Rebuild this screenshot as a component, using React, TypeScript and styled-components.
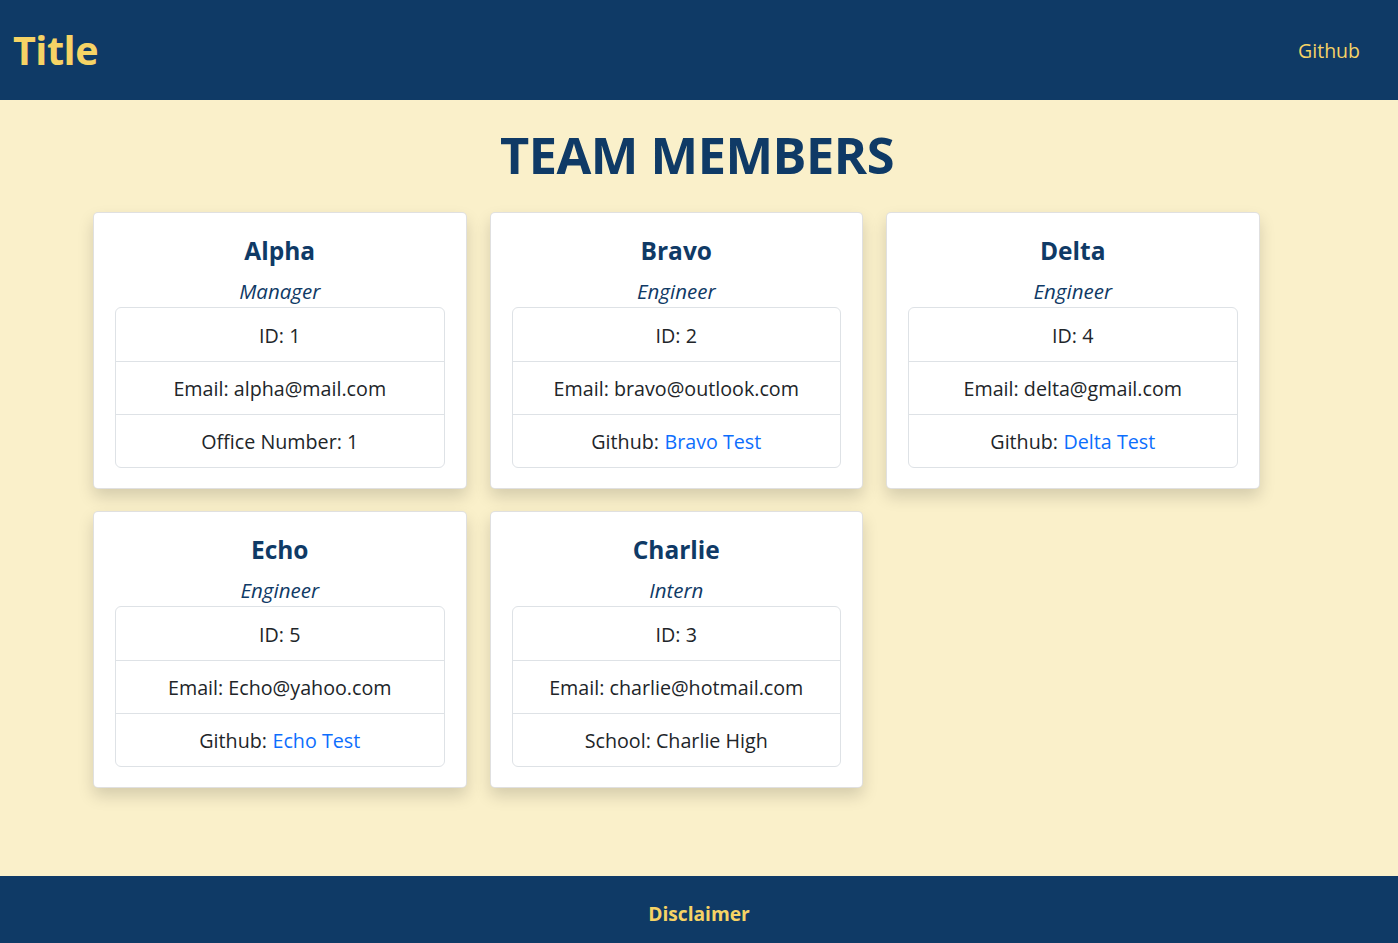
import React from "react";
import styled, { createGlobalStyle } from "styled-components";

const navy = "#0f3a66";
const gold = "#f6d365";
const cream = "#faf0ca";

const GlobalStyle = createGlobalStyle`
  * {
    box-sizing: border-box;
  }
  body {
    margin: 0;
    font-family: "Segoe UI", "Open Sans", "Noto Sans", sans-serif;
    color: #212529;
    background: ${cream};
  }
`;

const Page = styled.div`
  min-height: 100vh;
  display: flex;
  flex-direction: column;
`;

const Header = styled.header`
  height: 100px;
  background: ${navy};
  display: flex;
  align-items: center;
  justify-content: space-between;
  padding: 0 38px 0 13px;
`;

const Brand = styled.h1`
  margin: 2px 0 0;
  color: ${gold};
  font-size: 39.5px;
  font-weight: 700;
  line-height: 1.2;
  letter-spacing: -0.5px;
`;

const NavLink = styled.a`
  color: ${gold};
  font-size: 19.5px;
  text-decoration: none;
`;

const Main = styled.main`
  flex: 1;
  padding: 22px 0 60px;
`;

const Heading = styled.h2`
  margin: 0 4px 24px 0;
  text-align: center;
  color: ${navy};
  font-size: 50.5px;
  font-weight: 700;
  line-height: 1.3;
  letter-spacing: -0.5px;
`;

const CardGrid = styled.div`
  display: grid;
  grid-template-columns: repeat(3, 373.5px);
  gap: 22px 23px;
  padding-left: 93px;
`;

const Card = styled.div`
  background: #fff;
  border: 1px solid rgba(0, 0, 0, 0.12);
  border-radius: 5px;
  box-shadow: 0 8px 16px rgba(0, 0, 0, 0.15);
  padding: 21px 21px 20px;
  display: flex;
  flex-direction: column;
  align-items: stretch;
`;

const Name = styled.h3`
  margin: 1px 0 0;
  text-align: center;
  color: ${navy};
  font-size: 24.5px;
  font-weight: 700;
  line-height: 32px;
`;

const Role = styled.p`
  margin: 9px 0 0;
  text-align: center;
  color: ${navy};
  font-size: 20.5px;
  font-style: italic;
  line-height: 30px;
`;

const InfoList = styled.ul`
  list-style: none;
  margin: 1px 0 0;
  padding: 0;
  border: 1px solid #dee2e6;
  border-radius: 6px;
`;

const InfoItem = styled.li`
  height: 53px;
  display: flex;
  align-items: center;
  justify-content: center;
  padding-top: 2px;
  font-size: 19.7px;
  & + & {
    border-top: 1px solid #dee2e6;
  }
`;

const ProfileLink = styled.a`
  color: #0d6efd;
  text-decoration: none;
  margin-left: 0.28em;
`;

const Footer = styled.footer`
  height: 67px;
  background: ${navy};
  display: flex;
  align-items: center;
  justify-content: center;
  padding-top: 7px;
  color: ${gold};
  font-size: 19.2px;
  font-weight: 700;
`;

type Member = {
  name: string;
  role: string;
  id: number;
  email: string;
  extra: { label: string; value: string; link?: boolean };
};

const members: Member[] = [
  { name: "Alpha", role: "Manager", id: 1, email: "alpha@mail.com", extra: { label: "Office Number", value: "1" } },
  { name: "Bravo", role: "Engineer", id: 2, email: "bravo@outlook.com", extra: { label: "Github", value: "Bravo Test", link: true } },
  { name: "Delta", role: "Engineer", id: 4, email: "delta@gmail.com", extra: { label: "Github", value: "Delta Test", link: true } },
  { name: "Echo", role: "Engineer", id: 5, email: "Echo@yahoo.com", extra: { label: "Github", value: "Echo Test", link: true } },
  { name: "Charlie", role: "Intern", id: 3, email: "charlie@hotmail.com", extra: { label: "School", value: "Charlie High" } },
];

const MemberCard = ({ name, role, id, email, extra }: Member) => (
  <Card>
    <Name>{name}</Name>
    <Role>{role}</Role>
    <InfoList>
      <InfoItem>ID: {id}</InfoItem>
      <InfoItem>Email: {email}</InfoItem>
      <InfoItem>
        {extra.label}:
        {extra.link ? <ProfileLink href="#">{extra.value}</ProfileLink> : ` ${extra.value}`}
      </InfoItem>
    </InfoList>
  </Card>
);

export default function App() {
  return (
    <Page>
      <GlobalStyle />
      <Header>
        <Brand>Title</Brand>
        <NavLink href="#">Github</NavLink>
      </Header>
      <Main>
        <Heading>TEAM MEMBERS</Heading>
        <CardGrid>
          {members.map((m) => (
            <MemberCard key={m.id} {...m} />
          ))}
        </CardGrid>
      </Main>
      <Footer>Disclaimer</Footer>
    </Page>
  );
}
